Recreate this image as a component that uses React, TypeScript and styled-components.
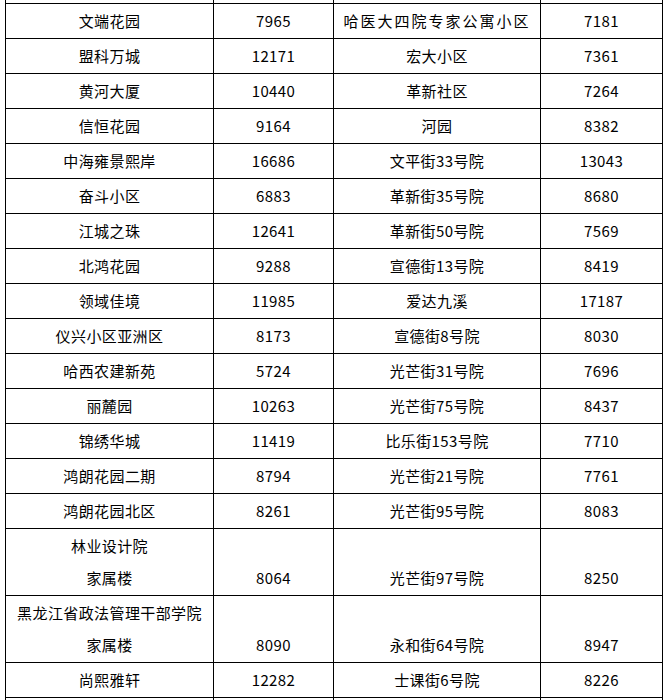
import React from 'react'
import styled, { createGlobalStyle } from 'styled-components'

const GlobalStyle = createGlobalStyle`
  html, body {
    margin: 0;
    padding: 0;
    background: #ffffff;
  }
  body {
    font-family: "Noto Sans CJK SC", sans-serif;
    color: #000000;
    overflow: hidden;
  }
`

type Row = {
  name: string[]
  count: string
  place: string
  total: string
  wide?: boolean
}

const rows: Row[] = [
  { name: ['文端花园'], count: '7965', place: '哈医大四院专家公寓小区', total: '7181', wide: true },
  { name: ['盟科万城'], count: '12171', place: '宏大小区', total: '7361' },
  { name: ['黄河大厦'], count: '10440', place: '革新社区', total: '7264' },
  { name: ['信恒花园'], count: '9164', place: '河园', total: '8382' },
  { name: ['中海雍景熙岸'], count: '16686', place: '文平街33号院', total: '13043' },
  { name: ['奋斗小区'], count: '6883', place: '革新街35号院', total: '8680' },
  { name: ['江城之珠'], count: '12641', place: '革新街50号院', total: '7569' },
  { name: ['北鸿花园'], count: '9288', place: '宣德街13号院', total: '8419' },
  { name: ['领域佳境'], count: '11985', place: '爱达九溪', total: '17187' },
  { name: ['仪兴小区亚洲区'], count: '8173', place: '宣德街8号院', total: '8030' },
  { name: ['哈西农建新苑'], count: '5724', place: '光芒街31号院', total: '7696' },
  { name: ['丽麓园'], count: '10263', place: '光芒街75号院', total: '8437' },
  { name: ['锦绣华城'], count: '11419', place: '比乐街153号院', total: '7710' },
  { name: ['鸿朗花园二期'], count: '8794', place: '光芒街21号院', total: '7761' },
  { name: ['鸿朗花园北区'], count: '8261', place: '光芒街95号院', total: '8083' },
  { name: ['林业设计院', '家属楼'], count: '8064', place: '光芒街97号院', total: '8250' },
  { name: ['黑龙江省政法管理干部学院', '家属楼'], count: '8090', place: '永和街64号院', total: '8947' },
  { name: ['尚熙雅轩'], count: '12282', place: '士课街6号院', total: '8226' },
]

const Page = styled.div`
  padding-left: 5px;
`

const Table = styled.table`
  width: 657px;
  margin-top: -32px;
  border-collapse: collapse;
  table-layout: fixed;
`

const Cell = styled.td<{ $wide?: boolean }>`
  border: 1px solid #000000;
  padding: 1px 0;
  text-align: center;
  vertical-align: bottom;
  font-size: 15px;
  line-height: 32px;
  letter-spacing: ${p => (p.$wide ? '2px' : '0.4px')};
  white-space: nowrap;
`

const Line = styled.div``

const App = () => {
  return (
    <Page>
      <GlobalStyle />
      <Table>
        <colgroup>
          <col style={{ width: 208 }} />
          <col style={{ width: 120 }} />
          <col style={{ width: 207 }} />
          <col style={{ width: 122 }} />
        </colgroup>
        <tbody>
          <tr>
            <Cell>&nbsp;</Cell>
            <Cell />
            <Cell />
            <Cell />
          </tr>
          {rows.map((r, i) => (
            <tr key={i}>
              <Cell>
                {r.name.map((n, j) => (
                  <Line key={j}>{n}</Line>
                ))}
              </Cell>
              <Cell>{r.count}</Cell>
              <Cell $wide={r.wide}>{r.place}</Cell>
              <Cell>{r.total}</Cell>
            </tr>
          ))}
          <tr>
            <Cell>&nbsp;</Cell>
            <Cell />
            <Cell />
            <Cell />
          </tr>
        </tbody>
      </Table>
    </Page>
  )
}

export default App
